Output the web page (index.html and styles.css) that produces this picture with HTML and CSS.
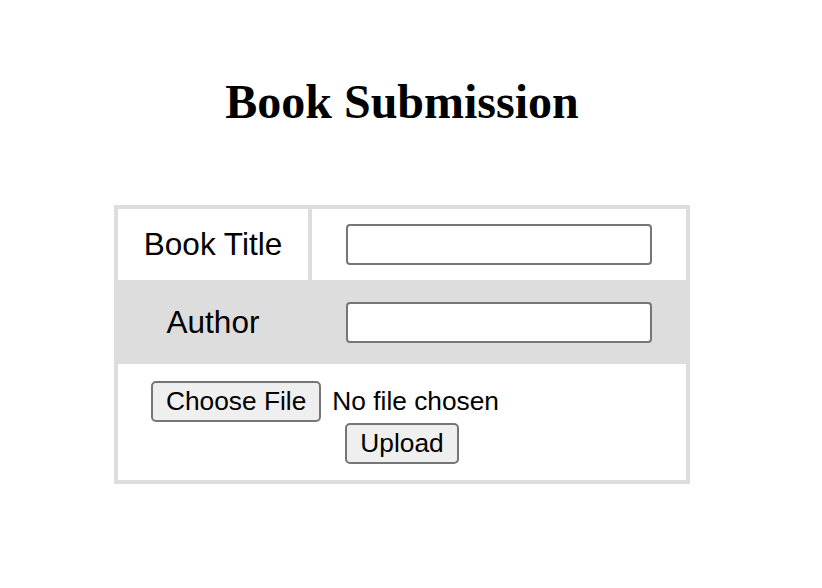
FILE: index.html
```html
<!DOCTYPE html>
<html lang="en">
<head>
<meta charset="utf-8">
<title>Book Submission</title>
<link rel="stylesheet" href="styles.css">
</head>
<body>
<main class="page">
  <h1 class="title">Book Submission</h1>
  <form class="form">
    <table class="book-table">
      <colgroup>
        <col class="col-label">
        <col class="col-field">
      </colgroup>
      <tr class="row row-title">
        <td class="label-cell"><label for="title">Book Title</label></td>
        <td class="field-cell"><input id="title" class="text-input" type="text"></td>
      </tr>
      <tr class="row row-author">
        <td class="label-cell"><label for="author">Author</label></td>
        <td class="field-cell"><input id="author" class="text-input" type="text"></td>
      </tr>
      <tr class="row row-upload">
        <td class="upload-cell" colspan="2">
          <div class="file-picker">
            <button type="button" class="btn">Choose File</button>
            <span class="file-status">No file chosen</span>
          </div>
          <div class="submit-row">
            <button type="submit" class="btn">Upload</button>
          </div>
        </td>
      </tr>
    </table>
  </form>
</main>
</body>
</html>
```

FILE: styles.css
```css
html, body {
  margin: 0;
  padding: 0;
  background: #ffffff;
}

.page {
  width: 804px;
  padding-top: 74px;
  text-align: center;
}

.title {
  margin: 0 0 75px;
  font-family: "Liberation Serif", "Times New Roman", serif;
  font-weight: bold;
  font-size: 48px;
  line-height: 56px;
  color: #000;
}

.form {
  margin: 0;
}

.book-table {
  width: 576px;
  margin: 0 auto;
  border: 2px solid #dddddd;
  border-collapse: separate;
  border-spacing: 0;
  table-layout: fixed;
  font-family: "Liberation Sans", Arial, sans-serif;
  color: #000;
}

.col-label {
  width: 194px;
}

.col-field {
  width: 378px;
}

.book-table td {
  border: 2px solid #dddddd;
  padding: 15px 0;
  vertical-align: middle;
  text-align: center;
}

.row-author td {
  background: #dddddd;
  padding: 18px 0 17px;
}

.label-cell {
  font-size: 31.5px;
}

.text-input {
  display: block;
  box-sizing: border-box;
  width: 306px;
  height: 41px;
  margin: 0 auto;
  padding: 0 4px;
  border: 2px solid #767676;
  border-radius: 4px;
  background: #ffffff;
  font-family: "Liberation Sans", Arial, sans-serif;
  font-size: 26px;
  outline: none;
}

.book-table td.upload-cell {
  padding: 17px 0 16px;
}

.file-picker {
  width: 502px;
  margin: 0 auto;
  display: flex;
  align-items: center;
  gap: 11px;
  height: 41px;
}

.submit-row {
  display: flex;
  justify-content: center;
  margin-top: 1px;
}

.btn {
  box-sizing: border-box;
  height: 41px;
  padding: 0 13px;
  border: 2px solid #767676;
  border-radius: 5px;
  background: #efefef;
  color: #000;
  font-family: "Liberation Sans", Arial, sans-serif;
  font-size: 26.3px;
  line-height: 1;
}

.file-status {
  font-size: 26.3px;
  white-space: nowrap;
}
```
